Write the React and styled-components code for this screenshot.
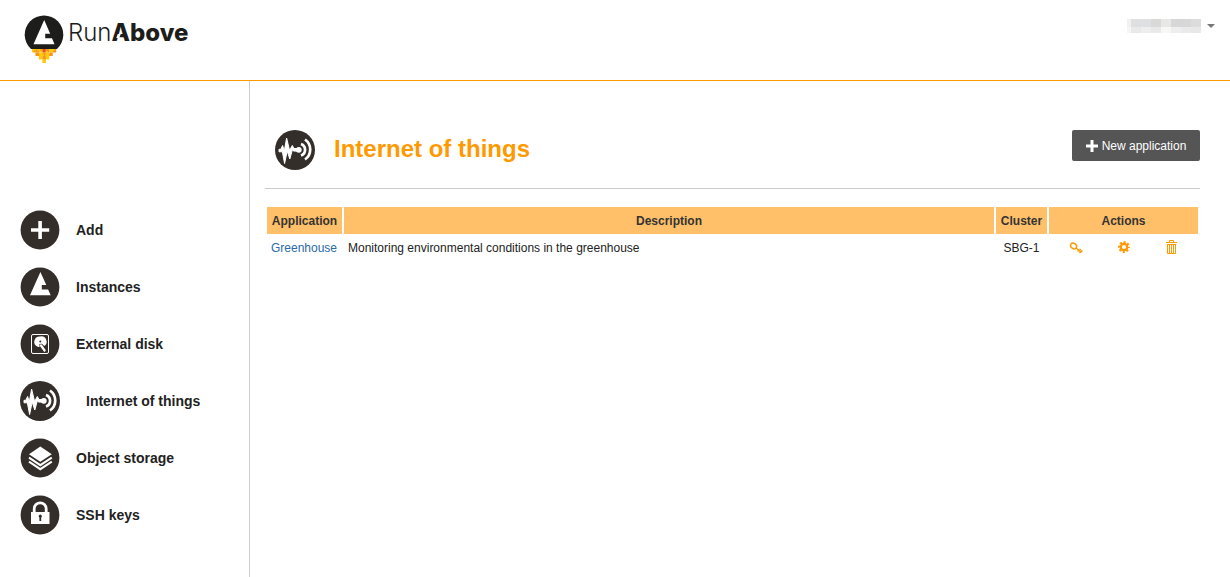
import React from "react";
import styled, { createGlobalStyle } from "styled-components";

const GlobalStyle = createGlobalStyle`
  * { box-sizing: border-box; }
  body {
    margin: 0;
    background: #fff;
    color: #222;
    font: 12px/18px "Liberation Sans", Arial, sans-serif;
  }
`;

const Page = styled.div`
  display: flex;
  flex-direction: column;
  min-height: 100vh;
`;

const Header = styled.header`
  display: flex;
  justify-content: space-between;
  align-items: flex-start;
  height: 81px;
  padding: 14px 15px 0 24px;
  border-bottom: 1px solid #f90;
`;

const Brand = styled.a`
  display: flex;
  gap: 3px;
  color: #1d1d1b;
  font: 300 24px/38px Inter, sans-serif;
  text-decoration: none;
`;

const BrandStrong = styled.span`
  font-weight: 800;
`;

const NotchedLetter = styled.span`
  position: relative;

  &::after {
    content: "";
    position: absolute;
    left: 6px;
    bottom: 9px;
    width: 3px;
    height: 4px;
    background: #fff;
    transform: skewX(-20deg);
  }
`;

const UserMenu = styled.button`
  display: flex;
  align-items: center;
  gap: 6px;
  padding: 5px 0;
  border: 0;
  background: none;
`;

const HiddenName = styled.span`
  display: grid;
  grid-template-columns: 4px 10px 10px 10px 10px 10px 10px 10px;
  grid-auto-rows: 8px 6px;
`;

const Block = styled.span`
  background: ${(p) => p.$tone};
`;

const Caret = styled.span`
  border: 4px solid transparent;
  border-top-color: #777;
  border-bottom: 0;
`;

const Body = styled.div`
  display: flex;
  flex: 1;
`;

const Sidebar = styled.nav`
  flex: none;
  width: 250px;
  padding: 129px 20px 0;
  border-right: 1px solid #ccc;
`;

const NavList = styled.ul`
  display: flex;
  flex-direction: column;
  gap: 17px;
  margin: 0;
  padding: 0;
  list-style: none;
`;

const NavLink = styled.a`
  display: flex;
  align-items: center;
  gap: ${(p) => (p.$active ? 26 : 16)}px;
  color: #222;
  font-size: 14px;
  font-weight: bold;
  text-decoration: none;
`;

const Main = styled.main`
  flex: 1;
  min-width: 0;
  padding: 49px 30px 30px 15px;
`;

const TitleBar = styled.div`
  display: flex;
  align-items: flex-start;
  justify-content: space-between;
  padding: 0 0 18px 10px;
  border-bottom: 1px solid #ccc;
`;

const Heading = styled.div`
  display: flex;
  gap: 19px;
`;

const Title = styled.h1`
  margin: 0;
  color: #f90;
  font-size: 24px;
  line-height: 38px;
`;

const NewButton = styled.button`
  display: flex;
  align-items: center;
  justify-content: center;
  gap: 4px;
  width: 128px;
  height: 31px;
  padding: 0;
  border: 0;
  border-radius: 2px;
  background: #555;
  color: #fff;
  font: inherit;
`;

const Table = styled.table`
  width: 100%;
  margin-top: 16px;
  border-spacing: 2px;
  table-layout: fixed;
`;

const Col = styled.col`
  width: ${(p) => p.$width};
`;

const HeadCell = styled.th`
  height: 27px;
  padding: 0;
  background: #ffc069;
  color: #333;
`;

const Cell = styled.td`
  height: 24px;
  padding: 0 4px;
  text-align: ${(p) => p.$align || "left"};
`;

const AppLink = styled.a`
  color: #2a6aa8;
  text-decoration: none;
`;

const Actions = styled.div`
  display: flex;
  justify-content: center;
  gap: 34px;
  padding-bottom: 2px;
`;

const IconButton = styled.button`
  display: flex;
  padding: 0;
  border: 0;
  background: none;
  color: #f90;
`;

const FLAME = ["YOYROYO", ".OYOYO.", "..YOY..", "...Y..."];
const FLAME_COLORS = { Y: "#ffcb05", O: "#f7941e", R: "#e84e1b" };

const BrandMark = () => (
  <svg width="41" height="50" viewBox="0 0 41 50" aria-hidden="true">
    <path d="M7 35A19.300 19.300 0 1 1 33 35z" fill="#1d1d1b" />
    <path d="M20.200 6 9.500 30.300h21l-2.500-6h-6.800v-4.500h5z" fill="#fff" />
    {FLAME.map((row, y) =>
      [...row].map((c, x) =>
        c === "." ? null : (
          <rect key={`${x}-${y}`} x={8 + x * 3.45} y={35 + y * 3.5} width="3.500" height="3.500" fill={FLAME_COLORS[c]} />
        )
      )
    )}
    <path
      d="M9.700 36.500h1.700v1.700H9.700zM16.600 35h1.700v1.700h-1.700zM23.500 36.500h1.700v1.700h-1.700zM13.200 40h1.700v1.700h-1.700zM25.300 40H27v1.700h-1.700zM20 43.700h1.700v1.700H20z"
      fill="#f7941e"
    />
    <path d="M13.200 35h1.700v1.700h-1.700zM22 37h1.700v1.500H22zM28.900 35h1.700v1.700h-1.700zM18.300 40.200H20v1.700h-1.700z" fill="#ffcb05" />
  </svg>
);

const GLYPHS = {
  add: <path d="M18.300 11h3.600v7.200h7.300v3.600h-7.300V29h-3.600v-7.200H11v-3.600h7.300z" fill="#fff" />,
  instances: <path d="M20.400 5 10 28.300h20.700l-2.600-5.900h-6.300v-4.500h4.500z" fill="#fff" />,
  disk: (
    <>
      <rect x="11.500" y="10.500" width="17" height="19" rx="1.500" fill="none" stroke="#fff" />
      <path d="M20 12.500a5.300 5.300 0 0 0-4 9.200c1 .9 2.500 1.300 3.600 1.300l-.2-3 2.500-.2 2.400 2.200a5.300 5.300 0 0 0-4.300-9.500z" fill="#fff" />
      <circle cx="20.300" cy="17.500" r="1" fill="#342e2a" />
      <path d="m21 21.500 3.600 5" stroke="#fff" strokeWidth="2.200" strokeLinecap="round" />
    </>
  ),
  iot: (
    <>
      <path
        d="M4 19.300h1.800L7.600 15.500l1.700 5.500L11.600 8l3 12.500L17.300 15.500l1.700 3h5v2.600h-5.500l-1-1.800L14.800 29l-2.600-8-2.600 12.500L7.300 21.500l-.3.300H4z"
        fill="#fff"
        stroke="#fff"
        strokeLinejoin="round"
      />
      <circle cx="23.800" cy="19.800" r="2.900" fill="#fff" />
      <path d="M26 14a6.100 6.100 0 0 1 0 11.500M30 9.500a12.200 12.200 0 0 1 0 20" fill="none" stroke="#fff" strokeWidth="2.700" />
    </>
  ),
  storage: (
    <>
      <path d="m20.300 8.500 11.500 7.800-11.500 7.400L9 16.300z" fill="#fff" />
      <path d="m9 19.700 11.300 7.500 11.500-7.500M9 23.700l11.300 7.500 11.500-7.500" fill="none" stroke="#fff" strokeWidth="2" />
    </>
  ),
  keys: (
    <>
      <path d="M14.200 18v-4.200a6 6 0 0 1 12 0V18" fill="none" stroke="#fff" strokeWidth="2.800" />
      <path d="M11 17h18.500v12H11z" fill="#fff" />
      <path d="M20.300 19.500a1.800 1.800 0 0 1 .9 3.200V26h-1.800v-3.300a1.800 1.800 0 0 1 .9-3.200z" fill="#342e2a" />
    </>
  ),
};

const RoundIcon = ({ name }) => (
  <svg width="40" height="40" viewBox="0 0 40 40" aria-hidden="true">
    <circle cx="20" cy="20" r={name === "iot" ? 20 : 19.4} fill="#342e2a" />
    {GLYPHS[name]}
  </svg>
);

const PlusIcon = () => (
  <svg width="12" height="12" viewBox="0 0 12 12" aria-hidden="true">
    <path d="M4.500 0h3v4.500H12v3H7.500V12h-3V7.500H0v-3h4.500z" fill="#fff" />
  </svg>
);

const KeyIcon = () => (
  <svg width="14" height="14" viewBox="0 0 14 14" fill="none" stroke="currentColor" aria-hidden="true">
    <ellipse cx="4.600" cy="6" rx="3.200" ry="2.500" transform="rotate(35 4.600 6)" strokeWidth="1.500" />
    <path d="m7 8 5.500 4.500M8.500 11.500l1.500-1.500M10.500 13l1-1M10.500 9l1.500 1M12 10.500l1.500 1" strokeWidth="1.400" />
  </svg>
);

const GearIcon = () => (
  <svg width="14" height="14" viewBox="0 0 14 14" fill="none" stroke="currentColor" aria-hidden="true">
    <circle cx="7" cy="7" r="3.200" strokeWidth="2.200" />
    <circle cx="7" cy="7" r="4.800" strokeWidth="2.200" strokeDasharray="2.100 1.670" strokeDashoffset="1.050" />
  </svg>
);

const TrashIcon = () => (
  <svg width="14" height="14" viewBox="0 0 14 14" fill="none" stroke="currentColor" aria-hidden="true">
    <path d="M1 2.500h11M4.500 2.500v-2h4v2M2.500 4v9.500h8V4M2.500 4.500h8M4.500 5v8M6.500 5v8M8.500 5v8" />
  </svg>
);

const NAV = [
  ["add", "Add"],
  ["instances", "Instances"],
  ["disk", "External disk"],
  ["iot", "Internet of things"],
  ["storage", "Object storage"],
  ["keys", "SSH keys"],
];

const TONES = [
  "#f1f1f1", "#dedfe0", "#dfe0e1", "#d9d9d9", "#e8e8e6", "#d7d7d7", "#d7d7d7", "#dcdcdc",
  "#f5f5f5", "#e9e9e9", "#eeeeee", "#e9e9e9", "#f8f7f4", "#eeeeee", "#eaeaea", "#e8e8e8",
];

export default function App() {
  return (
    <Page>
      <GlobalStyle />
      <Header>
        <Brand href="#" aria-label="RunAbove">
          <BrandMark />
          <span>
            Run
            <BrandStrong><NotchedLetter>A</NotchedLetter>bove</BrandStrong>
          </span>
        </Brand>
        <UserMenu aria-label="Account">
          <HiddenName>
            {TONES.map((tone, i) => <Block key={i} $tone={tone} />)}
          </HiddenName>
          <Caret />
        </UserMenu>
      </Header>
      <Body>
        <Sidebar>
          <NavList>
            {NAV.map(([icon, label]) => (
              <li key={icon}>
                <NavLink href="#" $active={icon === "iot"}>
                  <RoundIcon name={icon} />
                  {label}
                </NavLink>
              </li>
            ))}
          </NavList>
        </Sidebar>
        <Main>
          <TitleBar>
            <Heading>
              <RoundIcon name="iot" />
              <Title>Internet of things</Title>
            </Heading>
            <NewButton><PlusIcon />New application</NewButton>
          </TitleBar>
          <Table>
            <colgroup>
              <Col $width="75px" />
              <Col $width="auto" />
              <Col $width="51px" />
              <Col $width="149px" />
            </colgroup>
            <thead>
              <tr>
                <HeadCell>Application</HeadCell>
                <HeadCell>Description</HeadCell>
                <HeadCell>Cluster</HeadCell>
                <HeadCell>Actions</HeadCell>
              </tr>
            </thead>
            <tbody>
              <tr>
                <Cell><AppLink href="#">Greenhouse</AppLink></Cell>
                <Cell>Monitoring environmental conditions in the greenhouse</Cell>
                <Cell $align="center">SBG-1</Cell>
                <Cell>
                  <Actions>
                    <IconButton aria-label="Keys"><KeyIcon /></IconButton>
                    <IconButton aria-label="Settings"><GearIcon /></IconButton>
                    <IconButton aria-label="Delete"><TrashIcon /></IconButton>
                  </Actions>
                </Cell>
              </tr>
            </tbody>
          </Table>
        </Main>
      </Body>
    </Page>
  );
}
